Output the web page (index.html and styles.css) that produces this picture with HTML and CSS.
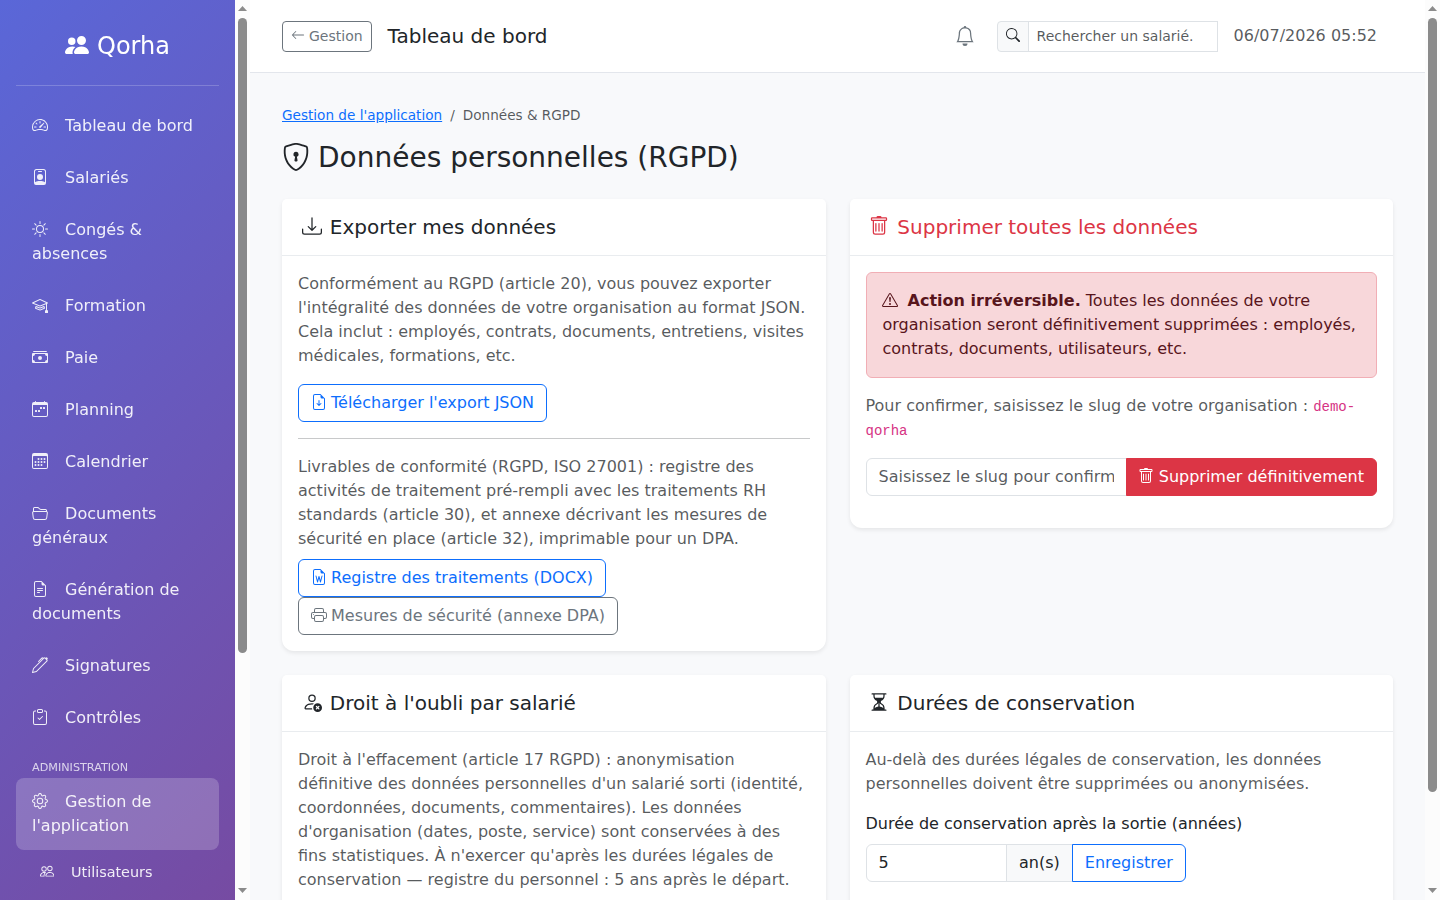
FILE: index.html
```html
<!DOCTYPE html>
<html lang="fr">
<head>
<meta charset="utf-8">
<title>Données personnelles (RGPD) - Qorha</title>
<link rel="stylesheet" href="styles.css">
</head>
<body>
<svg class="sprite" aria-hidden="true">
  <symbol id="people-fill" viewBox="0 0 16 16"><path d="M7 14s-1 0-1-1 1-4 5-4 5 3 5 4-1 1-1 1zm4-6a3 3 0 1 0 0-6 3 3 0 0 0 0 6m-5.784 6A2.24 2.24 0 0 1 5 13c0-1.355.68-2.75 1.936-3.72A6.3 6.3 0 0 0 5 9c-4 0-5 3-5 4s1 1 1 1zM4.5 8a2.5 2.5 0 1 0 0-5 2.5 2.5 0 0 0 0 5"/></symbol>
  <symbol id="speedometer" viewBox="0 0 16 16"><path d="M8 4a.5.5 0 0 1 .5.5V6a.5.5 0 0 1-1 0V4.500A.5.5 0 0 1 8 4M3.732 5.732a.5.5 0 0 1 .707 0l.915.914a.5.5 0 1 1-.708.708l-.914-.915a.5.5 0 0 1 0-.707M2 10a.5.5 0 0 1 .5-.5h1.586a.5.5 0 0 1 0 1H2.500A.5.5 0 0 1 2 10m9.500 0a.5.5 0 0 1 .5-.5h1.500a.5.5 0 0 1 0 1H12a.5.5 0 0 1-.5-.5m.754-4.246a.39.39 0 0 0-.527-.02L7.547 9.310a.91.91 0 1 0 1.302 1.258l3.434-4.297a.39.39 0 0 0-.029-.518z"/><path fill-rule="evenodd" d="M0 10a8 8 0 1 1 15.547 2.661c-.442 1.253-1.845 1.602-2.932 1.250C11.309 13.488 9.475 13 8 13c-1.474 0-3.310.488-4.615.911-1.087.352-2.490.003-2.932-1.250A8 8 0 0 1 0 10m8-7a7 7 0 0 0-6.603 9.329c.203.575.923.876 1.680.63C4.397 12.533 6.358 12 8 12s3.604.532 4.923.96c.757.245 1.477-.056 1.680-.631A7 7 0 0 0 8 3"/></symbol>
  <symbol id="badge" viewBox="0 0 16 16"><path d="M6.500 2a.5.5 0 0 0 0 1h3a.5.5 0 0 0 0-1zM11 8a3 3 0 1 1-6 0 3 3 0 0 1 6 0"/><path d="M4.500 0A2.500 2.500 0 0 0 2 2.500V14a2 2 0 0 0 2 2h8a2 2 0 0 0 2-2V2.500A2.500 2.500 0 0 0 11.500 0zM3 2.500A1.500 1.500 0 0 1 4.500 1h7A1.500 1.500 0 0 1 13 2.500v10.795a4.200 4.200 0 0 0-.776-.492C11.392 12.387 10.063 12 8 12s-3.392.387-4.224.803a4.200 4.200 0 0 0-.776.492z"/></symbol>
  <symbol id="sun" viewBox="0 0 16 16"><path d="M8 11a3 3 0 1 1 0-6 3 3 0 0 1 0 6m0 1a4 4 0 1 0 0-8 4 4 0 0 0 0 8M8 0a.5.5 0 0 1 .5.5v2a.5.5 0 0 1-1 0v-2A.5.5 0 0 1 8 0m0 13a.5.5 0 0 1 .5.5v2a.5.5 0 0 1-1 0v-2A.5.5 0 0 1 8 13m8-5a.5.5 0 0 1-.5.5h-2a.5.5 0 0 1 0-1h2a.5.5 0 0 1 .5.5M3 8a.5.5 0 0 1-.5.5h-2a.5.5 0 0 1 0-1h2A.5.5 0 0 1 3 8m10.657-5.657a.5.5 0 0 1 0 .707l-1.414 1.415a.5.5 0 1 1-.707-.708l1.414-1.414a.5.5 0 0 1 .707 0m-9.193 9.193a.5.5 0 0 1 0 .707L3.050 13.657a.5.5 0 0 1-.707-.707l1.414-1.414a.5.5 0 0 1 .707 0m9.193 2.121a.5.5 0 0 1-.707 0l-1.414-1.414a.5.5 0 0 1 .707-.707l1.414 1.414a.5.5 0 0 1 0 .707M4.464 4.465a.5.5 0 0 1-.707 0L2.343 3.050a.5.5 0 1 1 .707-.707l1.414 1.414a.5.5 0 0 1 0 .708"/></symbol>
  <symbol id="mortarboard" viewBox="0 0 16 16"><path d="M8.211 2.047a.5.5 0 0 0-.422 0l-7.500 3.500a.5.5 0 0 0 .025.917l7.500 3a.5.5 0 0 0 .372 0L14 7.140V13a1 1 0 0 0-1 1v2h3v-2a1 1 0 0 0-1-1V6.739l.686-.275a.5.5 0 0 0 .025-.917zM8 8.460 1.758 5.965 8 3.052l6.242 2.913z"/><path d="M4.176 9.032a.5.5 0 0 0-.656.327l-.5 1.700a.5.5 0 0 0 .294.605l4.500 1.800a.5.5 0 0 0 .372 0l4.500-1.800a.5.5 0 0 0 .294-.605l-.5-1.700a.5.5 0 0 0-.656-.327L8 10.466zm-.068 1.873.22-.748 3.496 1.311a.5.5 0 0 0 .352 0l3.496-1.311.22.748L8 12.460z"/></symbol>
  <symbol id="cash" viewBox="0 0 16 16"><path d="M1 3a1 1 0 0 1 1-1h12a1 1 0 0 1 1 1zm7 8a2 2 0 1 0 0-4 2 2 0 0 0 0 4"/><path d="M0 5a1 1 0 0 1 1-1h14a1 1 0 0 1 1 1v8a1 1 0 0 1-1 1H1a1 1 0 0 1-1-1zm3 0a2 2 0 0 1-2 2v4a2 2 0 0 1 2 2h10a2 2 0 0 1 2-2V7a2 2 0 0 1-2-2z"/></symbol>
  <symbol id="week" viewBox="0 0 16 16"><path d="M11 6.500a.5.5 0 0 1 .5-.5h1a.5.5 0 0 1 .5.5v1a.5.5 0 0 1-.5.5h-1a.5.5 0 0 1-.5-.5zm-3 0a.5.5 0 0 1 .5-.5h1a.5.5 0 0 1 .5.5v1a.5.5 0 0 1-.5.5h-1a.5.5 0 0 1-.5-.5zm-5 3a.5.5 0 0 1 .5-.5h1a.5.5 0 0 1 .5.5v1a.5.5 0 0 1-.5.5h-1a.5.5 0 0 1-.5-.5zm3 0a.5.5 0 0 1 .5-.5h1a.5.5 0 0 1 .5.5v1a.5.5 0 0 1-.5.5h-1a.5.5 0 0 1-.5-.5z"/><path d="M3.500 0a.5.5 0 0 1 .5.5V1h8V.5a.5.5 0 0 1 1 0V1h1a2 2 0 0 1 2 2v11a2 2 0 0 1-2 2H2a2 2 0 0 1-2-2V3a2 2 0 0 1 2-2h1V.5a.5.5 0 0 1 .5-.5M1 4v10a1 1 0 0 0 1 1h12a1 1 0 0 0 1-1V4z"/></symbol>
  <symbol id="calendar" viewBox="0 0 16 16"><path d="M14 0H2a2 2 0 0 0-2 2v12a2 2 0 0 0 2 2h12a2 2 0 0 0 2-2V2a2 2 0 0 0-2-2M1 3.857C1 3.384 1.448 3 2 3h12c.552 0 1 .384 1 .857v10.286c0 .473-.448.857-1 .857H2c-.552 0-1-.384-1-.857z"/><path d="M6.500 7a1 1 0 1 0 0-2 1 1 0 0 0 0 2m3 0a1 1 0 1 0 0-2 1 1 0 0 0 0 2m3 0a1 1 0 1 0 0-2 1 1 0 0 0 0 2m-9 3a1 1 0 1 0 0-2 1 1 0 0 0 0 2m3 0a1 1 0 1 0 0-2 1 1 0 0 0 0 2m3 0a1 1 0 1 0 0-2 1 1 0 0 0 0 2m3 0a1 1 0 1 0 0-2 1 1 0 0 0 0 2m-9 3a1 1 0 1 0 0-2 1 1 0 0 0 0 2m3 0a1 1 0 1 0 0-2 1 1 0 0 0 0 2m3 0a1 1 0 1 0 0-2 1 1 0 0 0 0 2"/></symbol>
  <symbol id="folder" viewBox="0 0 16 16"><path d="M1 3.500A1.500 1.500 0 0 1 2.500 2h2.764c.958 0 1.760.56 2.311 1.184C7.985 3.648 8.480 4 9 4h4.500A1.500 1.500 0 0 1 15 5.500v.64c.57.265.94.876.856 1.546l-.64 5.124A2.500 2.500 0 0 1 12.733 15H3.266a2.500 2.500 0 0 1-2.481-2.190l-.64-5.124A1.500 1.500 0 0 1 1 6.140zM2 6h12v-.5a.5.5 0 0 0-.5-.5H9c-.964 0-1.710-.629-2.174-1.154C6.374 3.334 5.820 3 5.264 3H2.500a.5.5 0 0 0-.5.5zm-.367 1a.5.5 0 0 0-.496.562l.64 5.124A1.500 1.500 0 0 0 3.266 14h9.468a1.500 1.500 0 0 0 1.489-1.314l.64-5.124A.5.5 0 0 0 14.367 7z"/></symbol>
  <symbol id="file-text" viewBox="0 0 16 16"><path d="M5.500 7a.5.5 0 0 0 0 1h5a.5.5 0 0 0 0-1zM5 9.500a.5.5 0 0 1 .5-.5h5a.5.5 0 0 1 0 1h-5a.5.5 0 0 1-.5-.5m0 2a.5.5 0 0 1 .5-.5h2a.5.5 0 0 1 0 1h-2a.5.5 0 0 1-.5-.5"/><path d="M9.500 0H4a2 2 0 0 0-2 2v12a2 2 0 0 0 2 2h8a2 2 0 0 0 2-2V4.500zm0 1v2A1.500 1.500 0 0 0 11 4.500h2V14a1 1 0 0 1-1 1H4a1 1 0 0 1-1-1V2a1 1 0 0 1 1-1z"/></symbol>
  <symbol id="pen" viewBox="0 0 16 16"><path d="m13.498.795.149-.149a1.207 1.207 0 1 1 1.707 1.708l-.149.148a1.500 1.500 0 0 1-.059 2.059L4.854 14.854a.5.5 0 0 1-.233.131l-4 1a.5.5 0 0 1-.606-.606l1-4a.5.5 0 0 1 .131-.232l9.642-9.642a.5.5 0 0 0-.642.056L6.854 4.854a.5.5 0 1 1-.708-.708L9.440.854A1.500 1.500 0 0 1 11.500.796a1.500 1.500 0 0 1 1.998-.001m-.644.766a.5.5 0 0 0-.707 0L1.950 11.756l-.764 3.057 3.057-.764L14.440 3.854a.5.5 0 0 0 0-.708z"/></symbol>
  <symbol id="clipboard" viewBox="0 0 16 16"><path d="M10.854 7.146a.5.5 0 0 1 0 .708l-3 3a.5.5 0 0 1-.708 0l-1.500-1.500a.5.5 0 1 1 .708-.708L7.500 9.793l2.646-2.647a.5.5 0 0 1 .708 0"/><path d="M4 1.500H3a2 2 0 0 0-2 2V14a2 2 0 0 0 2 2h10a2 2 0 0 0 2-2V3.500a2 2 0 0 0-2-2h-1v1h1a1 1 0 0 1 1 1V14a1 1 0 0 1-1 1H3a1 1 0 0 1-1-1V3.500a1 1 0 0 1 1-1h1z"/><path d="M9.500 1a.5.5 0 0 1 .5.5v1a.5.5 0 0 1-.5.5h-3a.5.5 0 0 1-.5-.5v-1a.5.5 0 0 1 .5-.5zm-3-1A1.500 1.500 0 0 0 5 1.500v1A1.500 1.500 0 0 0 6.500 4h3A1.500 1.500 0 0 0 11 2.500v-1A1.500 1.500 0 0 0 9.500 0z"/></symbol>
  <symbol id="gear" viewBox="0 0 16 16"><path d="M8 4.754a3.246 3.246 0 1 0 0 6.492 3.246 3.246 0 0 0 0-6.492M5.754 8a2.246 2.246 0 1 1 4.492 0 2.246 2.246 0 0 1-4.492 0"/><path d="M9.796 1.343c-.527-1.790-3.065-1.790-3.592 0l-.094.319a.873.873 0 0 1-1.255.52l-.292-.16c-1.640-.892-3.433.902-2.540 2.541l.159.292a.873.873 0 0 1-.52 1.255l-.319.094c-1.790.527-1.790 3.065 0 3.592l.319.094a.873.873 0 0 1 .52 1.255l-.16.292c-.892 1.640.901 3.434 2.541 2.540l.292-.159a.873.873 0 0 1 1.255.52l.094.319c.527 1.790 3.065 1.790 3.592 0l.094-.319a.873.873 0 0 1 1.255-.52l.292.16c1.640.893 3.434-.902 2.540-2.541l-.159-.292a.873.873 0 0 1 .52-1.255l.319-.094c1.790-.527 1.790-3.065 0-3.592l-.319-.094a.873.873 0 0 1-.52-1.255l.16-.292c.893-1.640-.902-3.433-2.541-2.540l-.292.159a.873.873 0 0 1-1.255-.52zm-2.633.283c.246-.835 1.428-.835 1.674 0l.094.319a1.873 1.873 0 0 0 2.693 1.115l.291-.16c.764-.415 1.600.42 1.184 1.185l-.159.292a1.873 1.873 0 0 0 1.116 2.692l.318.094c.835.246.835 1.428 0 1.674l-.319.094a1.873 1.873 0 0 0-1.115 2.693l.16.291c.415.764-.42 1.600-1.185 1.184l-.291-.159a1.873 1.873 0 0 0-2.693 1.116l-.094.318c-.246.835-1.428.835-1.674 0l-.094-.319a1.873 1.873 0 0 0-2.692-1.115l-.292.16c-.764.415-1.600-.42-1.184-1.185l.159-.291A1.873 1.873 0 0 0 1.945 8.930l-.319-.094c-.835-.246-.835-1.428 0-1.674l.319-.094A1.873 1.873 0 0 0 3.060 4.377l-.16-.292c-.415-.764.42-1.600 1.185-1.184l.292.159a1.873 1.873 0 0 0 2.692-1.115z"/></symbol>
  <symbol id="people" viewBox="0 0 16 16"><path d="M15 14s1 0 1-1-1-4-5-4-5 3-5 4 1 1 1 1zm-7.978-1L7 12.996c.001-.264.167-1.030.76-1.720C8.312 10.629 9.282 10 11 10c1.717 0 2.687.63 3.240 1.276.593.69.758 1.457.76 1.720l-.008.002-.014.002zM11 7a2 2 0 1 0 0-4 2 2 0 0 0 0 4m3-2a3 3 0 1 1-6 0 3 3 0 0 1 6 0M6.936 9.280a6 6 0 0 0-1.230-.247A7 7 0 0 0 5 9c-4 0-5 3-5 4q0 1 1 1h4.216A2.240 2.240 0 0 1 5 13c0-1.010.377-2.042 1.090-2.904.243-.294.526-.569.846-.816M4.920 10A5.500 5.500 0 0 0 4 13H1c0-.26.164-1.030.76-1.724.545-.636 1.492-1.256 3.160-1.275ZM1.500 5.500a3 3 0 1 1 6 0 3 3 0 0 1-6 0m3-2a2 2 0 1 0 0 4 2 2 0 0 0 0-4"/></symbol>
  <symbol id="arrow-left" viewBox="0 0 16 16"><path d="M15 8a.5.5 0 0 0-.5-.5H2.707l3.147-3.146a.5.5 0 1 0-.708-.708l-4 4a.5.5 0 0 0 0 .708l4 4a.5.5 0 0 0 .708-.708L2.707 8.500H14.500A.5.5 0 0 0 15 8"/></symbol>
  <symbol id="bell" viewBox="0 0 16 16"><path d="M8 16a2 2 0 0 0 2-2H6a2 2 0 0 0 2 2M8 1.918l-.797.161A4 4 0 0 0 4 6c0 .628-.134 2.197-.459 3.742-.16.767-.376 1.566-.663 2.258h10.244c-.287-.692-.502-1.490-.663-2.258C12.134 8.197 12 6.628 12 6a4 4 0 0 0-3.203-3.920zM14.220 12c.223.447.481.801.78 1H1c.299-.199.557-.553.78-1C2.680 10.200 3 6.880 3 6c0-2.420 1.720-4.440 4.005-4.901a1 1 0 1 1 1.990 0A5 5 0 0 1 13 6c0 .88.32 4.200 1.220 6"/></symbol>
  <symbol id="search" viewBox="0 0 16 16"><path d="M11.742 10.344a6.500 6.500 0 1 0-1.397 1.398h-.001q.044.06.098.115l3.850 3.850a1 1 0 0 0 1.415-1.414l-3.850-3.850a1 1 0 0 0-.115-.1zM12 6.500a5.500 5.500 0 1 1-11 0 5.500 5.500 0 0 1 11 0"/></symbol>
  <symbol id="shield" viewBox="0 0 16 16"><path d="M5.338 1.590a61 61 0 0 0-2.837.856.48.48 0 0 0-.328.39c-.554 4.157.726 7.190 2.253 9.188a10.700 10.700 0 0 0 2.287 2.233c.346.244.652.42.893.533q.18.085.293.118a1 1 0 0 0 .101.025 1 1 0 0 0 .1-.025q.114-.034.294-.118c.24-.113.547-.29.893-.533a10.700 10.700 0 0 0 2.287-2.233c1.527-1.997 2.807-5.031 2.253-9.188a.48.48 0 0 0-.328-.39c-.651-.213-1.750-.56-2.837-.855C9.552 1.290 8.531 1.067 8 1.067c-.53 0-1.552.223-2.662.524zM5.072.56C6.157.265 7.310 0 8 0s1.843.265 2.928.56c1.110.3 2.229.655 2.887.87a1.540 1.540 0 0 1 1.044 1.262c.596 4.477-.787 7.795-2.465 9.990a11.800 11.800 0 0 1-2.517 2.453 7 7 0 0 1-1.048.625c-.28.132-.581.24-.829.24s-.548-.108-.829-.24a7 7 0 0 1-1.048-.625 11.800 11.800 0 0 1-2.517-2.453C1.928 10.487.545 7.169 1.141 2.692A1.540 1.540 0 0 1 2.185 1.430 63 63 0 0 1 5.072.56"/><path d="M9.500 6.500a1.500 1.500 0 0 1-1 1.415l.385 1.990a.5.5 0 0 1-.491.595h-.788a.5.5 0 0 1-.49-.595l.384-1.990a1.500 1.500 0 1 1 2-1.415"/></symbol>
  <symbol id="download" viewBox="0 0 16 16"><path d="M.5 9.900a.5.5 0 0 1 .5.5v2.500a1 1 0 0 0 1 1h12a1 1 0 0 0 1-1v-2.500a.5.5 0 0 1 1 0v2.500a2 2 0 0 1-2 2H2a2 2 0 0 1-2-2v-2.500a.5.5 0 0 1 .5-.5"/><path d="M7.646 11.854a.5.5 0 0 0 .708 0l3-3a.5.5 0 0 0-.708-.708L8.500 10.293V1.500a.5.5 0 0 0-1 0v8.793L5.354 8.146a.5.5 0 1 0-.708.708z"/></symbol>
  <symbol id="trash" viewBox="0 0 16 16"><path d="M5.500 5.500A.5.5 0 0 1 6 6v6a.5.5 0 0 1-1 0V6a.5.5 0 0 1 .5-.5m2.500 0a.5.5 0 0 1 .5.5v6a.5.5 0 0 1-1 0V6a.5.5 0 0 1 .5-.5m3 .5a.5.5 0 0 0-1 0v6a.5.5 0 0 0 1 0z"/><path d="M14.500 3a1 1 0 0 1-1 1H13v9a2 2 0 0 1-2 2H5a2 2 0 0 1-2-2V4h-.5a1 1 0 0 1-1-1V2a1 1 0 0 1 1-1H6a1 1 0 0 1 1-1h2a1 1 0 0 1 1 1h3.500a1 1 0 0 1 1 1zM4.118 4 4 4.059V13a1 1 0 0 0 1 1h6a1 1 0 0 0 1-1V4.059L11.882 4zM2.500 3h11V2h-11z"/></symbol>
  <symbol id="warning" viewBox="0 0 16 16"><path d="M7.938 2.016A.13.13 0 0 1 8.002 2a.13.13 0 0 1 .063.016.15.15 0 0 1 .054.057l6.857 11.667c.036.06.035.124.002.183a.2.2 0 0 1-.054.06.1.1 0 0 1-.066.017H1.146a.1.1 0 0 1-.066-.017.2.2 0 0 1-.054-.06.18.18 0 0 1 .002-.183L7.884 2.073a.15.15 0 0 1 .054-.057m1.044-.45a1.130 1.130 0 0 0-1.960 0L.165 13.233c-.457.778.091 1.767.98 1.767h13.713c.889 0 1.438-.99.98-1.767z"/><path d="M7.002 12a1 1 0 1 1 2 0 1 1 0 0 1-2 0M7.100 5.995a.905.905 0 1 1 1.800 0l-.35 3.507a.552.552 0 0 1-1.100 0z"/></symbol>
  <symbol id="file-down" viewBox="0 0 16 16"><path d="M8.500 6.500a.5.5 0 0 0-1 0v3.793L6.354 9.146a.5.5 0 1 0-.708.708l2 2a.5.5 0 0 0 .708 0l2-2a.5.5 0 0 0-.708-.708L8.500 10.293z"/><path d="M14 14V4.500L9.500 0H4a2 2 0 0 0-2 2v12a2 2 0 0 0 2 2h8a2 2 0 0 0 2-2M9.500 3A1.500 1.500 0 0 0 11 4.500h2V14a1 1 0 0 1-1 1H4a1 1 0 0 1-1-1V2a1 1 0 0 1 1-1h5.500z"/></symbol>
  <symbol id="file-word" viewBox="0 0 16 16"><path d="M5.485 6.879a.5.5 0 1 0-.97.242l1.500 6a.5.5 0 0 0 .967.01L8 9.402l1.018 3.730a.5.5 0 0 0 .967-.01l1.500-6a.5.5 0 0 0-.97-.242l-1.036 4.144-.997-3.655a.5.5 0 0 0-.964 0l-.997 3.655z"/><path d="M14 14V4.500L9.500 0H4a2 2 0 0 0-2 2v12a2 2 0 0 0 2 2h8a2 2 0 0 0 2-2M9.500 3A1.500 1.500 0 0 0 11 4.500h2V14a1 1 0 0 1-1 1H4a1 1 0 0 1-1-1V2a1 1 0 0 1 1-1h5.500z"/></symbol>
  <symbol id="printer" viewBox="0 0 16 16"><path d="M2.500 8a.5.5 0 1 0 0-1 .5.5 0 0 0 0 1"/><path d="M5 1a2 2 0 0 0-2 2v2H2a2 2 0 0 0-2 2v3a2 2 0 0 0 2 2h1v1a2 2 0 0 0 2 2h6a2 2 0 0 0 2-2v-1h1a2 2 0 0 0 2-2V7a2 2 0 0 0-2-2h-1V3a2 2 0 0 0-2-2zM4 3a1 1 0 0 1 1-1h6a1 1 0 0 1 1 1v2H4zm1 5a2 2 0 0 0-2 2v1H2a1 1 0 0 1-1-1V7a1 1 0 0 1 1-1h12a1 1 0 0 1 1 1v3a1 1 0 0 1-1 1h-1v-1a2 2 0 0 0-2-2zm7 2v3a1 1 0 0 1-1 1H5a1 1 0 0 1-1-1v-3a1 1 0 0 1 1-1h6a1 1 0 0 1 1 1"/></symbol>
  <symbol id="person-x" viewBox="0 0 16 16"><path d="M11 5a3 3 0 1 1-6 0 3 3 0 0 1 6 0M8 7a2 2 0 1 0 0-4 2 2 0 0 0 0 4m.256 7a4.500 4.500 0 0 1-.229-1.004H3c.001-.246.154-.986.832-1.664C4.484 10.680 5.711 10 8 10q.39 0 .74.025c.226-.341.496-.65.804-.918Q8.844 9.002 8 9c-5 0-6 3-6 4s1 1 1 1z"/><path d="M12.500 16a3.500 3.500 0 1 0 0-7 3.500 3.500 0 0 0 0 7m-.646-4.854.646.647.646-.647a.5.5 0 0 1 .708.708l-.647.646.647.646a.5.5 0 0 1-.708.708l-.646-.647-.646.647a.5.5 0 0 1-.708-.708l.647-.646-.647-.646a.5.5 0 0 1 .708-.708"/></symbol>
  <symbol id="hourglass" viewBox="0 0 16 16"><path d="M2.500 15a.5.5 0 1 1 0-1h1v-1a4.500 4.500 0 0 1 2.557-4.060c.29-.139.443-.377.443-.59v-.7c0-.213-.154-.451-.443-.59A4.500 4.500 0 0 1 3.500 3V2h-1a.5.5 0 0 1 0-1h11a.5.5 0 0 1 0 1h-1v1a4.500 4.500 0 0 1-2.557 4.060c-.29.139-.443.377-.443.59v.7c0 .213.154.451.443.59A4.500 4.500 0 0 1 12.500 13v1h1a.5.5 0 0 1 0 1zm2-13v1c0 .537.12 1.045.337 1.500h6.326c.216-.455.337-.963.337-1.500V2zm3 6.350c0 .701-.478 1.236-1.011 1.492A3.500 3.500 0 0 0 4.500 13s.866-1.299 3-1.480zm1 0v3.170c2.134.181 3 1.480 3 1.480a3.500 3.500 0 0 0-1.989-3.158C8.978 9.586 8.500 9.052 8.500 8.351z"/></symbol>
</svg>

<div class="app">
  <aside class="sidebar">
    <div class="sidebar-inner">
      <div class="brand"><svg class="bi"><use href="#people-fill"/></svg><span>Qorha</span></div>
      <nav class="nav">
        <a class="nav-link"><svg class="bi"><use href="#speedometer"/></svg> Tableau de bord</a>
        <a class="nav-link"><svg class="bi"><use href="#badge"/></svg> Salariés</a>
        <a class="nav-link"><svg class="bi"><use href="#sun"/></svg> Congés &amp; absences</a>
        <a class="nav-link"><svg class="bi"><use href="#mortarboard"/></svg> Formation</a>
        <a class="nav-link"><svg class="bi"><use href="#cash"/></svg> Paie</a>
        <a class="nav-link"><svg class="bi"><use href="#week"/></svg> Planning</a>
        <a class="nav-link"><svg class="bi"><use href="#calendar"/></svg> Calendrier</a>
        <a class="nav-link"><svg class="bi"><use href="#folder"/></svg> Documents généraux</a>
        <a class="nav-link"><svg class="bi"><use href="#file-text"/></svg> Génération de documents</a>
        <a class="nav-link"><svg class="bi"><use href="#pen"/></svg> Signatures</a>
        <a class="nav-link"><svg class="bi"><use href="#clipboard"/></svg> Contrôles</a>
        <div class="nav-section">ADMINISTRATION</div>
        <a class="nav-link active"><svg class="bi"><use href="#gear"/></svg> Gestion de l'application</a>
        <a class="nav-link sub"><svg class="bi"><use href="#people"/></svg> Utilisateurs</a>
      </nav>
    </div>
    <div class="scrollbar">
      <svg class="arrow" viewBox="0 0 9 5"><path d="M4.500 0 9 5H0z"/></svg>
      <div class="track"><div class="thumb thumb-side"></div></div>
      <svg class="arrow" viewBox="0 0 9 5"><path d="M0 0h9L4.500 5z"/></svg>
    </div>
  </aside>

  <main class="main">
    <header class="topbar">
      <a class="btn btn-sm btn-outline-secondary"><svg class="bi"><use href="#arrow-left"/></svg>Gestion</a>
      <div class="page-name">Tableau de bord</div>
      <div class="topbar-right">
        <svg class="bi bell"><use href="#bell"/></svg>
        <div class="search">
          <span class="search-icon"><svg class="bi"><use href="#search"/></svg></span>
          <input class="search-input" type="text" placeholder="Rechercher un salarié.">
        </div>
        <span class="clock">06/07/2026 05:52</span>
      </div>
    </header>

    <div class="content">
      <div class="breadcrumb"><a class="crumb-link">Gestion de l'application</a><span class="crumb-sep">/</span><span>Données &amp; RGPD</span></div>
      <h1 class="title"><svg class="bi"><use href="#shield"/></svg>Données personnelles (RGPD)</h1>

      <div class="grid">
        <section class="card">
          <h2 class="card-header"><svg class="bi"><use href="#download"/></svg> Exporter mes données</h2>
          <div class="card-body">
            <p class="muted">Conformément au RGPD (article 20), vous pouvez exporter l'intégralité des données de votre organisation au format JSON. Cela inclut : employés, contrats, documents, entretiens, visites médicales, formations, etc.</p>
            <a class="btn btn-outline-primary"><svg class="bi"><use href="#file-down"/></svg>Télécharger l'export JSON</a>
            <hr class="rule">
            <p class="muted tight">Livrables de conformité (RGPD, ISO 27001) : registre des activités de traitement pré-rempli avec les traitements RH standards (article 30), et annexe décrivant les mesures de sécurité en place (article 32), imprimable pour un DPA.</p>
            <div class="stack">
              <a class="btn btn-outline-primary"><svg class="bi"><use href="#file-word"/></svg>Registre des traitements (DOCX)</a>
              <a class="btn btn-outline-secondary"><svg class="bi"><use href="#printer"/></svg>Mesures de sécurité (annexe DPA)</a>
            </div>
          </div>
        </section>

        <section class="card">
          <h2 class="card-header danger"><svg class="bi"><use href="#trash"/></svg> Supprimer toutes les données</h2>
          <div class="card-body">
            <div class="alert"><svg class="bi"><use href="#warning"/></svg> <strong>Action irréversible.</strong> Toutes les données de votre organisation seront définitivement supprimées : employés, contrats, documents, utilisateurs, etc.</div>
            <p class="muted">Pour confirmer, saisissez le slug de votre organisation : <code>demo-qorha</code></p>
            <div class="input-group confirm">
              <input class="form-control grow" type="text" placeholder="Saisissez le slug pour confirmer">
              <button class="btn btn-danger"><svg class="bi"><use href="#trash"/></svg>Supprimer définitivement</button>
            </div>
          </div>
        </section>

        <section class="card">
          <h2 class="card-header"><svg class="bi"><use href="#person-x"/></svg> Droit à l'oubli par salarié</h2>
          <div class="card-body">
            <p class="muted">Droit à l'effacement (article 17 RGPD) : anonymisation définitive des données personnelles d'un salarié sorti (identité, coordonnées, documents, commentaires). Les données d'organisation (dates, poste, service) sont conservées à des fins statistiques. À n'exercer qu'après les durées légales de conservation — registre du personnel : 5 ans après le départ.</p>
          </div>
        </section>

        <section class="card">
          <h2 class="card-header"><svg class="bi"><use href="#hourglass"/></svg> Durées de conservation</h2>
          <div class="card-body">
            <p class="muted">Au-delà des durées légales de conservation, les données personnelles doivent être supprimées ou anonymisées.</p>
            <label class="label">Durée de conservation après la sortie (années)</label>
            <div class="input-group retention">
              <input class="form-control years" type="text" value="5">
              <span class="addon">an(s)</span>
              <button class="btn btn-outline-primary">Enregistrer</button>
            </div>
          </div>
        </section>
      </div>
    </div>
  </main>

  <div class="scrollbar">
    <svg class="arrow" viewBox="0 0 9 5"><path d="M4.500 0 9 5H0z"/></svg>
    <div class="track"><div class="thumb thumb-page"></div></div>
    <svg class="arrow" viewBox="0 0 9 5"><path d="M0 0h9L4.500 5z"/></svg>
  </div>
</div>
</body>
</html>
```

FILE: styles.css
```css
*, *::before, *::after { box-sizing: border-box; }

body {
  margin: 0;
  height: 900px;
  overflow: hidden;
  background: #f8f9fb;
  color: #212529;
  font: 16px/24px "DejaVu Sans", "Noto Sans", sans-serif;
}

p, h1, h2 { margin: 0; font-weight: 400; }
input, button { font: inherit; color: inherit; margin: 0; }

.sprite { display: none; }

.bi {
  display: inline-block;
  width: 1em;
  height: 1em;
  fill: currentColor;
  vertical-align: -.125em;
  flex: none;
}

.app { display: flex; height: 900px; }

/* Sidebar */
.sidebar {
  display: flex;
  flex: none;
  width: 250px;
  height: 900px;
  overflow: hidden;
  will-change: transform;
}

.sidebar-inner {
  flex: none;
  width: 235px;
  padding: 0 16px;
  overflow: hidden;
  background: linear-gradient(135deg, #5a67d8 0%, #764ba2 100%);
}

.brand {
  display: flex;
  align-items: center;
  justify-content: center;
  gap: 8px;
  height: 86px;
  padding-top: 7px;
  border-bottom: 1px solid rgba(255, 255, 255, .2);
  color: #fff;
  font-size: 24px;
}

.brand .bi { margin-bottom: 2px; }

.nav {
  display: flex;
  flex-direction: column;
  gap: 4px;
  padding-top: 16px;
}

.nav-link {
  padding: 12px 16px;
  border-radius: 8px;
  color: rgba(255, 255, 255, .9);
}

.nav-link .bi { margin-right: 12px; }
.nav-link.active { background: rgba(255, 255, 255, .2); }

.nav-link.sub {
  margin-top: -4px;
  padding: 10px 16px 10px 24px;
  font-size: 14.4px;
}

.nav-section {
  height: 28px;
  padding: 11px 16px 0;
  color: rgba(255, 255, 255, .75);
  font-size: 11.2px;
  line-height: 22px;
}

/* Scrollbars */
.scrollbar {
  display: flex;
  flex: none;
  flex-direction: column;
  width: 15px;
  height: 900px;
  padding: 6px 3px 7px;
  background: #fcfcfc;
}

.arrow { display: block; width: 9px; height: 5px; fill: #8b8b8b; }
.track { flex: 1; padding-top: 7px; }
.thumb { border-radius: 5px; background: #8b8b8b; }
.thumb-side { height: 635px; }
.thumb-page { height: 774px; }

/* Main column */
.main { flex: 1; min-width: 0; height: 900px; overflow: hidden; }

.topbar {
  display: flex;
  align-items: center;
  gap: 16px;
  height: 73px;
  padding: 0 32px;
  border-bottom: 1px solid #e3e6ec;
  background: #fff;
}

.page-name { font-size: 20px; }

.topbar-right {
  display: flex;
  align-items: center;
  margin-left: auto;
  padding-right: 16px;
}

.bell { margin-right: 22px; color: #6c757d; font-size: 20px; }
.search { display: flex; height: 31px; margin-right: 16px; font-size: 14px; }

.search-icon {
  display: flex;
  padding: 6px 8px;
  border: 1px solid #dee2e6;
  border-radius: 4px 0 0 4px;
  background: #f8f9fa;
}

.search-input {
  width: 190px;
  margin-left: -1px;
  padding: 4px 8px;
  border: 1px solid #dee2e6;
  outline: 0;
  background: #fff;
}

::placeholder { color: rgba(33, 37, 41, .75); opacity: 1; }
.clock { color: rgba(33, 37, 41, .75); white-space: nowrap; }

.content { padding: 32px 32px 0; }

.breadcrumb {
  display: flex;
  gap: 8px;
  height: 20px;
  color: rgba(33, 37, 41, .75);
  font-size: 13.6px;
  line-height: 20px;
}

.crumb-link { color: #0d6efd; text-decoration: underline; }

.title {
  display: flex;
  align-items: center;
  gap: 8px;
  height: 34px;
  margin: 16px 0 24px;
  font-size: 28px;
  line-height: 34px;
}

.title .bi { margin-bottom: 2px; }

.grid {
  display: grid;
  grid-template-columns: 1fr 1fr;
  gap: 24px;
  align-items: start;
}

/* Cards */
.card {
  border-radius: 5px 5px 12px 12px;
  background: #fff;
  box-shadow: 0 2px 4px rgba(0, 0, 0, .08);
}

.card-header {
  padding: 16px;
  border-bottom: 1px solid #e9ecef;
  font-size: 20px;
  line-height: 24px;
}

.card-header .bi { margin: 0 2px 0 3.500px; vertical-align: -1.500px; }
.card-header.danger { color: #dc3545; }
.card-body { padding: 16px; }

.muted { margin-bottom: 16px; color: rgba(33, 37, 41, .75); }
.muted.tight { margin-bottom: 8px; }

.rule { margin: 16px 0; border: 0; border-top: 1px solid #c8c9ca; }

.btn {
  display: inline-flex;
  align-items: center;
  gap: 4px;
  height: 38px;
  padding: 0 12px;
  border: 1px solid;
  border-radius: 6px;
  background: transparent;
  white-space: nowrap;
}

.btn .bi { margin-bottom: 2px; }
.card-body > .btn { display: flex; width: fit-content; }
.btn-sm { height: 31px; padding: 0 8px; border-radius: 4px; font-size: 14px; }
.btn-outline-primary { color: #0d6efd; }
.btn-outline-secondary { color: #6c757d; }
.btn-danger { border-color: #dc3545; background: #dc3545; color: #fff; }
.btn-danger .bi { margin-right: .6px; margin-left: -.6px; }

.stack { display: flex; flex-direction: column; align-items: flex-start; }

.alert {
  margin-bottom: 16px;
  padding: 16px;
  border: 1px solid #f1aeb5;
  border-radius: 6px;
  background: #f8d7da;
  color: #58151c;
}

.alert .bi { margin-right: 4.600px; margin-left: -.6px; }
strong { font-weight: 700; }
code { color: #d63384; font: 14px "Liberation Mono", monospace; }

/* Form rows */
.label { display: block; margin-bottom: 8px; }
.input-group { display: flex; height: 38px; }
.input-group.confirm { margin-bottom: 16px; }
.input-group.retention { margin-bottom: 24px; }

.form-control {
  min-width: 0;
  padding: 6px 12px;
  border: 1px solid #dee2e6;
  border-radius: 6px 0 0 6px;
  outline: 0;
  background: #fff;
}

.form-control.grow { flex: 1; }
.form-control.years { width: 141.500px; }

.addon {
  display: flex;
  align-items: center;
  margin-left: -1px;
  padding: 0 12px;
  border: 1px solid #dee2e6;
  background: #f8f9fa;
}

.input-group .btn { margin-left: -1px; border-radius: 0 6px 6px 0; }
```
